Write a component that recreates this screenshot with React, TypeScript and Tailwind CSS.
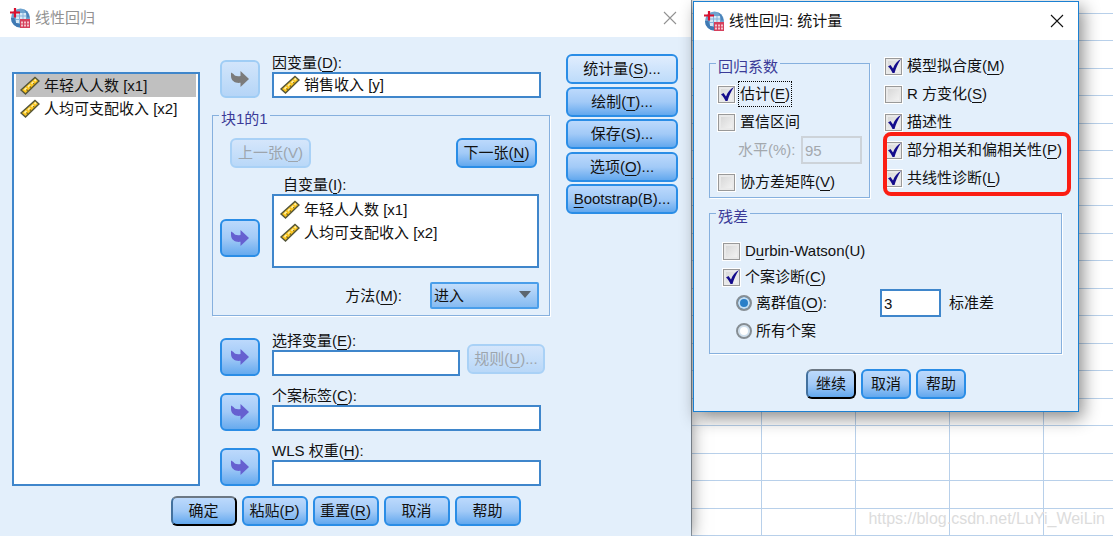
import { useId, useState } from "react";
import type { ReactNode } from "react";
import clsx from "clsx";

const FONT = "font-['Liberation_Sans','Noto_Sans_CJK_SC',sans-serif]";
const VARIABLES = ["年轻人人数 [x1]", "人均可支配收入 [x2]"];

// Sheet rows and columns behind the windows
const ROWS = Array.from({ length: 19 }, (_, i) => i);
const COLUMNS = [0, 1, 2, 3, 4];

function Key({ children }: { children: string }) {
  return <span className="underline decoration-1 underline-offset-3">{children}</span>;
}

function AppIcon() {
  return (
    <svg viewBox="0 0 20 20" className="size-5 shrink-0" aria-hidden="true">
      <circle cx="10.500" cy="10" r="9.500" fill="#6fa3cf" />
      <path d="M1 10a9.500 9.500 0 0 0 10 9.500V16C7 16 5 14 4.500 10z" fill="#3f79b3" />
      <path d="M14 1.500c3 1.500 5 4 5.500 8H17c0-3-1-5.500-3-8z" fill="#4b83ba" />
      <path d="M6 5h10v6h-5v4H6z" fill="#d6e8f6" />
      <path d="M6 8h10M6 11.500h5M9.500 5v10M13 5v6" stroke="#86b3da" fill="none" />
      <path d="M5 0v9.500M0 4.500h10" stroke="#d9102f" strokeWidth="2.200" fill="none" />
      <rect x="10" y="11" width="10" height="9" fill="#d5405c" />
      <path d="M11 14.500h8M11 17.500h8" stroke="#f3c3cb" strokeWidth="1.800" strokeDasharray="2 1" fill="none" />
    </svg>
  );
}

function RulerIcon() {
  return (
    <svg viewBox="0 0 20 20" className="size-5 shrink-0" aria-hidden="true">
      <path d="M1 14 15 1.500 19 5 5.500 18z" fill="#f9c21a" stroke="#55563a" strokeWidth="1.500" />
      <path d="m4.500 14 2-2M8 11l2-2M11.500 7.800l2-2M14.500 5l1.500-1.500" stroke="#ffee9c" strokeWidth="1.800" />
      <path d="m6.500 13.500 1.500 1.500M9.800 10.500l1.500 1.500M13.200 7.200l1.500 1.500" stroke="#85701c" strokeWidth="1.100" />
    </svg>
  );
}

function CloseIcon() {
  return (
    <svg viewBox="0 0 14 14" className="size-3.5" fill="none" stroke="currentColor" aria-hidden="true">
      <path d="M1 1l12 12M13 1 1 13" strokeWidth="1.100" />
    </svg>
  );
}

interface ButtonProps {
  children: ReactNode;
  className?: string;
  disabled?: boolean;
  variant?: "normal" | "default" | "hover";
}

function Button({ children, className, disabled, variant = "normal" }: ButtonProps) {
  return (
    <button
      type="button"
      disabled={disabled}
      className={clsx(
        "h-[30px] shrink-0 rounded-md border-2 bg-linear-to-b whitespace-nowrap leading-5",
        disabled && "border-[#a9d1f6] from-[#d5e6fb] to-[#b9d8f8] text-[#9da5ad]",
        !disabled && variant === "normal" && "border-[#2a8de6] from-[#bcd9fc] via-[#a2caf7] to-[#62a8ee]",
        !disabled && variant === "hover" && "border-[#2a8de6] from-[#e0edfd] to-[#bddbfa]",
        !disabled &&
          variant === "default" &&
          "border-t-[#6c7884] border-r-black border-b-black border-l-[#43719e] from-[#bcd9fc] via-[#a2caf7] to-[#62a8ee]",
        className
      )}
    >
      {children}
    </button>
  );
}

function MoveButton({ label, disabled, className }: { label: string; disabled?: boolean; className?: string }) {
  return (
    <button
      type="button"
      aria-label={label}
      disabled={disabled}
      className={clsx(
        "flex h-[38px] w-10 shrink-0 items-center justify-center rounded-md border-2 bg-linear-to-b",
        disabled
          ? "border-[#a0cdf5] from-[#d2e5fb] to-[#b5d5f7] text-[#7b7b7b]"
          : "border-[#2a8de6] from-[#bcd9fc] via-[#a2caf7] to-[#66aaee] text-[#6660d0]",
        className
      )}
    >
      <svg viewBox="0 0 18 16" className="h-4 w-[18px]" fill="currentColor" aria-hidden="true">
        <path d="M0 1.500 2.500 3C3.500 5 6 5.500 9.500 5V0L18 8l-8.500 8v-4.200C4.500 12.500 0 10 0 5z" />
      </svg>
    </button>
  );
}

function VariableItem({ name, selected }: { name: string; selected?: boolean }) {
  return (
    <li className={clsx("flex h-[23px] items-center gap-1 pl-1", selected && "bg-[#c0c0c0]")}>
      <RulerIcon />
      {name}
    </li>
  );
}

function Group({ title, children, className }: { title: string; children: ReactNode; className?: string }) {
  return (
    <fieldset className={clsx("border border-[#86b0de] shadow-[1px_1px_0_#fff]", className)}>
      <legend className="ml-1.5 h-[26px] px-0.5 pt-2 leading-[18px] text-[#3b3b98]">{title}</legend>
      {children}
    </fieldset>
  );
}

// Label above an empty target box, with its move button on the left
function TargetRow({ label, name, children }: { label: ReactNode; name: string; children?: ReactNode }) {
  const id = useId();
  return (
    <div className={clsx("flex items-end pl-2", children ? "pr-[5px]" : "pr-[9px]")}>
      <MoveButton label={name} />
      <div className="ml-3 min-w-0 flex-1">
        <label htmlFor={id} className="block h-[18px] leading-[18px]">
          {label}
        </label>
        <input id={id} type="text" className="block h-[26px] w-full border-2 border-[#3f86cb] bg-white px-1 outline-none" />
      </div>
      {children}
    </div>
  );
}

interface CheckProps {
  children: ReactNode;
  checked?: boolean;
  focused?: boolean;
  className?: string;
}

function Check({ children, checked = false, focused, className }: CheckProps) {
  const [on, setOn] = useState(checked);
  return (
    <label className={clsx("flex items-center gap-[3px] whitespace-nowrap", className ?? "h-7")}>
      <span className="relative size-[17px] shrink-0">
        <input
          type="checkbox"
          checked={on}
          onChange={(e) => setOn(e.target.checked)}
          className="block size-[17px] appearance-none border border-[#999] bg-linear-to-br from-[#d4d4d4] to-[#f6f6f6] shadow-[inset_0_0_0_2px_#e9e9e9] outline outline-white"
        />
        {on && (
          <svg viewBox="0 0 17 17" className="pointer-events-none absolute inset-0" fill="#140c8c" aria-hidden="true">
            <path d="M3 8.500 5.500 7 8 10.500C9.500 6.500 12 3 16 1 13 5 11 10 9.500 15H7.500C6.500 12.500 5 10 3 8.500z" />
          </svg>
        )}
      </span>
      <span className={clsx("border px-px leading-6", focused ? "border-dotted border-black" : "border-transparent")}>
        {children}
      </span>
    </label>
  );
}

interface RadioProps {
  children: ReactNode;
  value: string;
  current: string;
  onSelect: (value: string) => void;
}

function Radio({ children, value, current, onSelect }: RadioProps) {
  return (
    <label className="flex h-7 items-center gap-1 whitespace-nowrap">
      <input
        type="radio"
        name="cases"
        checked={current === value}
        onChange={() => onSelect(value)}
        className="size-4 appearance-none rounded-full border-2 border-[#868e94] bg-white shadow-[inset_0_0_0_2px_#cfe0ee] checked:bg-[#2a7fc8] checked:shadow-[inset_0_0_0_2px_#c4dff4]"
      />
      <span>{children}</span>
    </label>
  );
}

function RegressionWindow() {
  return (
    <section className="z-10 flex min-w-0 flex-1 flex-col bg-[#e3effb] shadow-[0_0_16px_rgba(0,0,0,0.5)]">
      <header className="flex h-[37px] items-center bg-white pr-3.5 pb-0.5 pl-2.5 text-[#929292]">
        <AppIcon />
        <h1 className="ml-[5px] flex-1">线性回归</h1>
        <button type="button" aria-label="关闭">
          <CloseIcon />
        </button>
      </header>

      <div className="flex pt-[17px] pr-[13px] pl-3">
        <ul className="mt-[18px] w-[188px] shrink-0 border-2 border-[#3f86cb] bg-white px-0.5">
          {VARIABLES.map((name, i) => (
            <VariableItem key={name} name={name} selected={i === 0} />
          ))}
        </ul>

        <div className="ml-3 min-w-0 flex-1">
          <div className="flex items-end pr-[9px] pl-2">
            <MoveButton label="移动到因变量" disabled />
            <div className="ml-3 min-w-0 flex-1">
              <label htmlFor="dependent" className="block h-[18px] leading-[18px]">
                因变量(<Key>D</Key>):
              </label>
              <div className="flex h-[26px] items-center gap-1 border-2 border-[#3f86cb] bg-white pl-1.5">
                <RulerIcon />
                <input id="dependent" type="text" defaultValue="销售收入 [y]" className="min-w-0 flex-1 outline-none" />
              </div>
            </div>
          </div>

          <Group title="块1的1" className="mt-1">
            <div className="flex justify-between pt-2.5 pr-3 pl-[17px]">
              <Button disabled className="w-[81px]">
                上一张(<Key>V</Key>)
              </Button>
              <Button className="w-[81px]">
                下一张(<Key>N</Key>)
              </Button>
            </div>
            <p id="independent" className="mt-2 ml-[70px] h-[18px] leading-[18px]">
              自变量(<Key>I</Key>):
            </p>
            <div className="flex items-end pr-2.5 pl-[7px]">
              <MoveButton label="移动到自变量" className="mb-[11px]" />
              <ul aria-labelledby="independent" className="ml-3 h-[74px] min-w-0 flex-1 border-2 border-[#3f86cb] bg-white pt-0.5 pl-0.5">
                {VARIABLES.map((name) => (
                  <VariableItem key={name} name={name} />
                ))}
              </ul>
            </div>
            <div className="mt-3.5 flex items-center justify-end pr-2.5 pb-1.5">
              <label htmlFor="method" className="mr-7">
                方法(<Key>M</Key>):
              </label>
              <div className="relative w-[109px]">
                <select
                  id="method"
                  defaultValue="进入"
                  className="block h-[27px] w-full appearance-none rounded-xs border-2 border-[#4a9eea] bg-linear-to-b from-[#c3ddfb] to-[#86bbf1] pl-0.5 outline-none"
                >
                  <option>进入</option>
                  <option>步进</option>
                  <option>除去</option>
                </select>
                <svg viewBox="0 0 12 7" className="pointer-events-none absolute top-[9px] right-2 h-[7px] w-3" aria-hidden="true">
                  <path d="M0 0h12L6 7z" fill="#5c6670" />
                </svg>
              </div>
            </div>
          </Group>

          <div className="mt-4 flex flex-col gap-[11px]">
            <TargetRow name="移动到选择变量" label={<>选择变量(<Key>E</Key>):</>}>
              <Button disabled className="mb-0.5 ml-[7px] w-[78px]">
                规则(<Key>U</Key>)...
              </Button>
            </TargetRow>
            <TargetRow name="移动到个案标签" label={<>个案标签(<Key>C</Key>):</>} />
            <TargetRow name="移动到权重" label={<>WLS 权重(<Key>H</Key>):</>} />
          </div>
        </div>

        <div className="ml-4 flex h-40 w-28 shrink-0 flex-col justify-between">
          <Button variant="hover">
            统计量(<Key>S</Key>)...
          </Button>
          <Button>
            绘制(<Key>T</Key>)...
          </Button>
          <Button>保存(S)...</Button>
          <Button>
            选项(<Key>O</Key>)...
          </Button>
          <Button>
            <Key>B</Key>ootstrap(B)...
          </Button>
        </div>
      </div>

      <footer className="flex justify-center gap-[5px] py-2.5">
        <Button variant="default" className="w-[66px]">确定</Button>
        <Button className="w-[66px]">
          粘贴(<Key>P</Key>)
        </Button>
        <Button className="w-[66px]">
          重置(<Key>R</Key>)
        </Button>
        <Button className="w-[66px]">取消</Button>
        <Button className="w-[66px]">帮助</Button>
      </footer>
    </section>
  );
}

function StatisticsDialog() {
  const [cases, setCases] = useState("outliers");
  return (
    <section
      role="dialog"
      aria-labelledby="statistics-title"
      className="absolute top-px left-0.5 z-20 w-[386px] border border-[#1b80d2] bg-[#e3effb] shadow-[4px_6px_16px_rgba(0,0,0,0.45)]"
    >
      <header className="flex h-[38px] items-center bg-white pr-3.5 pl-2.5">
        <AppIcon />
        <h2 id="statistics-title" className="ml-[5px] flex-1">
          线性回归: 统计量
        </h2>
        <button type="button" aria-label="关闭">
          <CloseIcon />
        </button>
      </header>

      <div className="px-[15px] pt-2.5 pb-3">
        <div className="flex">
          <Group title="回归系数" className="w-[161px] shrink-0">
            <div className="pt-1 pr-[7px] pb-px pl-2">
              <Check checked focused>
                估计(<Key>E</Key>)
              </Check>
              <Check>置信区间</Check>
              <div className="mb-1 flex h-7 items-center justify-between pl-5 text-[#a3a8ad]">
                <label htmlFor="level">水平(%):</label>
                <input
                  id="level"
                  type="text"
                  disabled
                  defaultValue="95"
                  className="h-7 w-[61px] border-2 border-[#cdd3d9] px-0.5"
                />
              </div>
              <Check>
                协方差矩阵(<Key>V</Key>)
              </Check>
            </div>
          </Group>

          <div className="ml-[15px] min-w-0 flex-1 pt-0.5">
            <Check checked>
              模型拟合度(<Key>M</Key>)
            </Check>
            <Check>
              R 方变化(<Key>S</Key>)
            </Check>
            <Check checked>描述性</Check>
            <div className="relative">
              <Check checked>
                部分相关和偏相关性(<Key>P</Key>)
              </Check>
              <Check checked>
                共线性诊断(<Key>L</Key>)
              </Check>
              <div className="pointer-events-none absolute -top-1 -right-2 -bottom-1 -left-0.5 rounded-lg border-4 border-[#fb1d13]" />
            </div>
          </div>
        </div>

        <Group title="残差" className="mt-0.5 mr-px">
          <div className="pt-[11px] pb-2 pl-[13px]">
            <Check>
              D<Key>u</Key>rbin-Watson(U)
            </Check>
            <Check checked className="h-6">
              个案诊断(<Key>C</Key>)
            </Check>
            <div className="flex h-7 items-center pl-[13px]">
              <div className="w-36">
                <Radio value="outliers" current={cases} onSelect={setCases}>
                  离群值(<Key>O</Key>):
                </Radio>
              </div>
              <input
                type="text"
                aria-label="标准差"
                defaultValue="3"
                className="h-7 w-[61px] border-2 border-[#3f86cb] bg-white px-0.5 outline-none"
              />
              <span className="ml-2">标准差</span>
            </div>
            <div className="pl-[13px]">
              <Radio value="all" current={cases} onSelect={setCases}>
                所有个案
              </Radio>
            </div>
          </div>
        </Group>

        <div className="mt-[15px] flex justify-center gap-[5px]">
          <Button variant="default" className="w-[50px]">继续</Button>
          <Button className="w-[50px]">取消</Button>
          <Button className="w-[50px]">帮助</Button>
        </div>
      </div>
    </section>
  );
}

function Sheet() {
  return (
    <div className="h-full overflow-hidden border-l border-[#9aa5b0] bg-white">
      <div className="h-3.5 border-b border-[#b8d0ea]" />
      {ROWS.map((row) => (
        <div key={row} className={clsx("flex border-b border-[#b8d0ea]", row % 2 ? "h-7" : "h-[27px]")}>
          {COLUMNS.map((column) => (
            <div
              key={column}
              className={clsx(
                "border-[#b8d0ea]",
                column === 0 && "w-[70px] shrink-0 border-r",
                column > 0 && column < 4 && "w-[94px] shrink-0 border-r",
                column === 4 && "flex-1"
              )}
            />
          ))}
        </div>
      ))}
    </div>
  );
}

export default function App() {
  return (
    <main className={clsx("flex min-h-screen overflow-hidden text-[15px] leading-[18px] text-[#111]", FONT)}>
      <RegressionWindow />
      <div className="relative h-screen w-[422px] shrink-0">
        <Sheet />
        <StatisticsDialog />
        <p className="absolute right-2 bottom-2 text-base leading-[18px] text-[#dcdcdc]">
          https://blog.csdn.net/LuYi_WeiLin
        </p>
      </div>
    </main>
  );
}
